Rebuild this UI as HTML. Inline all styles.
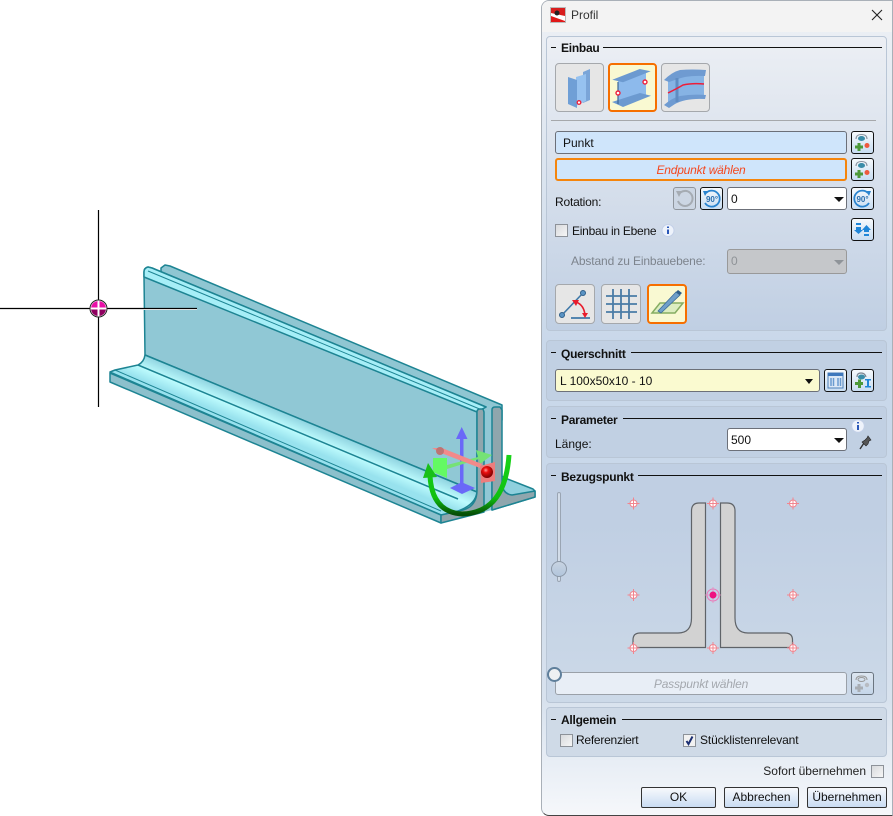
<!DOCTYPE html>
<html lang="de"><head><meta charset="utf-8"><title>Profil</title>
<style>
html,body{margin:0;padding:0;background:#fff}
body{width:893px;height:816px;position:relative;overflow:hidden;font:12px/14px "Liberation Sans",sans-serif;color:#111}
.a{position:absolute}
#dlg{left:541px;top:0;width:352px;height:816px;box-sizing:border-box;border:1px solid #a9b0b8;border-bottom:1px solid #444;border-radius:8px 0 0 8px;overflow:hidden;background:linear-gradient(#eef1f5 0,#c9d8ea 340px,#c9d8ea 460px,#d8e2ee 700px,#f6f8fb 816px)}
#tb{position:absolute;left:0;top:0;width:100%;height:31px;background:#f3f3f3}
.p{position:absolute;left:546px;width:341px;box-sizing:border-box;border:1px solid #b9c6d6;border-radius:4px;background:#c1d0e3}
.h{position:absolute;font-weight:bold;left:561px;height:14px;white-space:nowrap;letter-spacing:-.25px}
.l{position:absolute;height:1px;background:#111}
.t{position:absolute;white-space:nowrap}
.n{letter-spacing:-.2px}
.f{position:absolute;box-sizing:border-box;border:1px solid #6c7079;border-radius:3px;background:#fff;height:23px;line-height:22px;padding-left:3px}
.b{position:absolute;box-sizing:border-box;width:23px;height:23px;border:1px solid #111;border-radius:3px;background:linear-gradient(#f6f9fc,#c8ddf2)}
.b svg,.ib svg{position:absolute;left:0;top:0}
.ib{position:absolute;box-sizing:border-box;border:1px solid #a5a8ac;border-radius:4px;background:#e6e6e6}
.on{border:2px solid #f66f00;background:#f9f9d2}
.c{position:absolute;box-sizing:border-box;width:13px;height:13px;border:1px solid #8d9299;background:linear-gradient(135deg,#d8dadd,#f6f6f6)}
.ar{position:absolute;width:0;height:0;border-left:5px solid transparent;border-right:5px solid transparent;border-top:5px solid #111}
.btn{position:absolute;box-sizing:border-box;top:787px;height:21px;border:1px solid #333;border-radius:2px;text-align:center;line-height:19px;background:linear-gradient(#f7f9fc,#c9dcf3)}
</style></head><body>

<svg class="a" style="left:0;top:0" width="541" height="560" viewBox="0 0 541 560">
<defs>
<linearGradient id="fil" gradientUnits="userSpaceOnUse" x1="300" y1="419" x2="283" y2="460"><stop offset="0" stop-color="#8fd3e0"/><stop offset=".3" stop-color="#bdfbfd"/><stop offset=".55" stop-color="#98e2ee"/><stop offset="1" stop-color="#96dfed"/></linearGradient>
<linearGradient id="arc" x1="0" y1="0" x2="0" y2="1"><stop offset="0" stop-color="#19d419"/><stop offset=".72" stop-color="#10c010"/><stop offset="1" stop-color="#064f06"/></linearGradient>
<radialGradient id="ball" cx=".4" cy=".35" r=".7"><stop offset="0" stop-color="#ff9a9a"/><stop offset=".3" stop-color="#ee0f0f"/><stop offset="1" stop-color="#6d0000"/></radialGradient>
</defs>
<g stroke="#1d8493" stroke-width="1.5" stroke-linejoin="round">
<!-- back L strip + web -->
<path d="M161,272V268L165,265L170,266L502,405V420L161,275Z" fill="#8fc6d2"/>
<path d="M484,405H492V510L484,512Z" fill="#90c8d5" stroke="none"/>
<!-- back foot -->
<path d="M492,470L505,478L533,489L535,491V497L492,510Z" fill="#8fd0dd"/>
<!-- front web -->
<path d="M144,277V272Q144,268 148,267L152,268L486,407L477,412V492L145,355Z" fill="#90c8d5"/>
<path d="M144,277V272Q144,268 148,267L152,268L486,407L477,412Z" fill="#a6eef7"/>
<path d="M148,271L482,410" fill="none" stroke-width="1"/>
<!-- foot with fillet -->
<path d="M145,355L477,492Q475,510 441,515L112,373L110,372L115,370L138,365Q144,362 145,355Z" fill="url(#fil)"/>
<path d="M138,365L458,499" fill="none"/>
<path d="M115,370L441,511" fill="none" stroke-width="1"/>
<path d="M110,373V382L441,523V515Z" fill="#8cc0cc"/>
<!-- gray ends -->
<path d="M477,412Q477,409 480,409H483L484,412V512L441,523V515L463,510Q477,506 477,490Z" fill="#8fa6ad"/>
<path d="M492,410Q492,407 495,407H500L502,410V484Q503,494 512,495L535,491V497L492,510Z" fill="#8fa6ad"/>
</g>
<!-- gizmo -->
<path d="M461.700,427L467.500,439H463.500V483L475,488L462,494L450,488L460,483V439H456Z" fill="#6a68f8"/>
<path d="M433,458H447V478L433,472Z" fill="#63fa63"/>
<path d="M447,465L478,457L476,450L492,455L480,464L479,459L447,469Z" fill="#75e275"/>
<path d="M432,448L442,448L482,464L480,468L441,453Z" fill="#f28a8a"/>
<circle cx="440" cy="451" r="4" fill="#bd7474"/>
<path d="M480,466L495,462V481L481,483Z" fill="#ee7d7d"/>
<circle cx="487" cy="472" r="6" fill="url(#ball)"/>
<path d="M509,455Q505,513 462,514Q432,512 430,476" fill="none" stroke="url(#arc)" stroke-width="5"/>
<path d="M428,463L423,478L437,477Z" fill="#18c018"/>
<!-- crosshair -->
<rect x="100" y="309" width="97" height="1" fill="#fff"/>
<path d="M98.500,210V407M0,308.500H197" stroke="#000" stroke-width="1.200"/>
<circle cx="98.500" cy="308.500" r="8.500" fill="#fff" stroke="#222" stroke-width="1"/>
<path d="M91,307.500A7.500,7.500 0 0 1 97.500,301V307.500ZM99.500,301A7.500,7.500 0 0 1 106,307.500H99.500Z" fill="#ea10a8"/>
<path d="M91,309.500H97.500V316A7.500,7.500 0 0 1 91,309.500ZM99.500,309.500H106A7.500,7.500 0 0 1 99.500,316Z" fill="#900060"/>
</svg>

<div class="a" style="left:613px;top:0;width:13px;height:1px;background:#8b2a6b"></div>
<div id="dlg" class="a"><div id="tb"></div></div>

<svg class="a" style="left:550px;top:7px" width="16" height="16"><rect x=".5" y=".5" width="15" height="15" fill="#fff" stroke="#bbb"/><path d="M1,1H15V9L1,6Z" fill="#d81e1e"/><path d="M1,9L15,14V15H1Z" fill="#e01818"/><circle cx="7" cy="6" r="2.500" fill="#222"/></svg>
<div class="t" style="left:571px;top:8px;color:#333">Profil</div>
<svg class="a" style="left:871px;top:9px" width="12" height="12"><path d="M1,1L11,11M11,1L1,11" stroke="#222" stroke-width="1.100"/></svg>

<!-- panels -->
<div class="p" style="top:36px;height:295px;background:linear-gradient(#eceff4,#c0cfe3)"></div>
<div class="p" style="top:340px;height:61px"></div>
<div class="p" style="top:406px;height:52px"></div>
<div class="p" style="top:463px;height:240px;background:linear-gradient(#c0cfe3,#c0cfe3 25%,#ccd9e8)"></div>
<div class="p" style="top:707px;height:50px;background:#cfdae7"></div>

<!-- headers -->
<div class="l" style="left:551px;top:47px;width:5px"></div><div class="h" style="top:41px">Einbau</div><div class="l" style="left:603px;top:47px;width:279px"></div>
<div class="l" style="left:551px;top:352px;width:5px"></div><div class="h" style="top:347px">Querschnitt</div><div class="l" style="left:631px;top:352px;width:251px"></div>
<div class="l" style="left:551px;top:418px;width:5px"></div><div class="h" style="top:413px">Parameter</div><div class="l" style="left:623px;top:418px;width:259px"></div>
<div class="l" style="left:551px;top:475px;width:5px"></div><div class="h" style="top:470px">Bezugspunkt</div><div class="l" style="left:638px;top:475px;width:244px"></div>
<div class="l" style="left:551px;top:719px;width:5px"></div><div class="h" style="top:713px">Allgemein</div><div class="l" style="left:622px;top:719px;width:260px"></div>

<!-- Einbau type buttons -->
<div class="ib" style="left:555px;top:63px;width:49px;height:49px"><svg width="47" height="47"><path d="M27,8L34,5V36L27,39Z" fill="#7aa5d8"/><path d="M20,13L30,10V37L20,42Z" fill="#96c2f0"/><path d="M12,13L21,16V44L12,40Z" fill="#6f9fd6"/><circle cx="23" cy="38.500" r="1.800" fill="#fff" stroke="#f0203a" stroke-width="1.300"/></svg></div>
<div class="ib on" style="left:608px;top:63px;width:49px;height:49px"><svg width="45" height="45"><path d="M8,16L36,7V31L8,40Z" fill="#8dbaec"/><path d="M2.300,14.700L29.700,4L40.700,6.300L13,17.300Z" fill="#6c9ad0"/><path d="M2,37L30,28L41,30.700L13,42Z" fill="#6c9ad0"/><path d="M8,17V39" stroke="#3b6595" stroke-width="1.200"/><circle cx="35" cy="17" r="2" fill="#fff" stroke="#f0203a" stroke-width="1.400"/><circle cx="8" cy="28" r="2" fill="#fff" stroke="#f0203a" stroke-width="1.400"/></svg></div>
<div class="ib" style="left:661px;top:63px;width:49px;height:49px"><svg width="47" height="47"><path d="M6,15Q20,8 42,8V31Q22,31 6,42Z" fill="#86b3e4"/><path d="M2,16Q10,8 18,6Q30,5 44,6L43,12Q24,11 13,16L7,18Z" fill="#6f9bd1"/><path d="M2,41Q10,34 18,32Q30,30 44,31L43,35Q24,34 13,40L7,44Z" fill="#6f9bd1"/><path d="M15,14V38" stroke="#5f8cc2" stroke-width="3"/><path d="M6,29Q16,24 21,21Q30,19 42,20" fill="none" stroke="#ee1d38" stroke-width="1.500"/></svg></div>
<div class="a" style="left:551px;top:120px;width:325px;height:1px;background:#a6a8ab"></div>

<!-- Punkt -->
<div class="f" style="left:555px;top:131px;width:292px;background:#cfe5fb;padding-left:7px">Punkt</div>
<div class="f n" style="left:555px;top:158px;width:292px;background:#cfe5fb;border:2px solid #f5850c;color:#f4481f;font-style:italic;text-align:center;padding:0;line-height:21px">Endpunkt wählen</div>
<div class="b" style="left:851px;top:131px"><svg width="21" height="21"><path d="M4,7Q4,2.500 9.500,2.500T15,7" fill="none" stroke="#8b94a0" stroke-width="1.100"/><ellipse cx="9.500" cy="6.500" rx="3.500" ry="2.500" fill="#3a8ca8"/><path d="M3,13.500H5.500V11H8.500V13.500H11V16.500H8.500V19H5.500V16.500H3Z" fill="#4d9a3a"/><circle cx="15" cy="13.500" r="2.500" fill="#ee5a3e"/></svg></div>
<div class="b" style="left:851px;top:158px"><svg width="21" height="21"><path d="M4,7Q4,2.500 9.500,2.500T15,7" fill="none" stroke="#8b94a0" stroke-width="1.100"/><ellipse cx="9.500" cy="6.500" rx="3.500" ry="2.500" fill="#3a8ca8"/><path d="M3,13.500H5.500V11H8.500V13.500H11V16.500H8.500V19H5.500V16.500H3Z" fill="#4d9a3a"/><circle cx="15" cy="13.500" r="2.500" fill="#ee5a3e"/></svg></div>

<!-- Rotation -->
<div class="t n" style="left:555px;top:195px">Rotation:</div>
<div class="b" style="left:673px;top:187px;border-color:#8f959c;background:#ccd6e3"><svg width="21" height="21"><path d="M5,6A7.500,7.500 0 1 1 4,13" fill="none" stroke="#a5abb2" stroke-width="2"/><path d="M2,3L8,3L5,9Z" fill="#a5abb2"/></svg></div>
<div class="b" style="left:700px;top:187px"><svg width="21" height="21"><path d="M5,5A8,8 0 1 1 4,15" fill="none" stroke="#2a84cf" stroke-width="1.800"/><path d="M2,3H7L4,8Z" fill="#2a84cf"/><text x="11" y="14" font-size="8" font-weight="bold" text-anchor="middle" fill="#2a6fae" font-family="Liberation Sans,sans-serif">90°</text></svg></div>
<div class="f" style="left:727px;top:187px;width:120px">0</div><div class="ar" style="left:834px;top:197px"></div>
<div class="b" style="left:851px;top:187px"><svg width="21" height="21"><path d="M16,5A8,8 0 1 0 17,15" fill="none" stroke="#2a84cf" stroke-width="1.800"/><path d="M19,3H14L17,8Z" fill="#2a84cf"/><text x="10.500" y="14" font-size="8" font-weight="bold" text-anchor="middle" fill="#2a6fae" font-family="Liberation Sans,sans-serif">90°</text></svg></div>

<!-- Ebene -->
<div class="c" style="left:555px;top:224px"></div>
<div class="t n" style="left:572px;top:224px;letter-spacing:-.25px">Einbau in Ebene</div>
<svg class="a" style="left:661px;top:223px" width="14" height="15"><circle cx="7" cy="7.500" r="6" fill="#eef3fb" stroke="#c3d0e8"/><path d="M7,3.500V5M7,6.500V11" stroke="#2a57b8" stroke-width="2"/></svg>
<div class="b" style="left:851px;top:218px"><svg width="21" height="21"><path d="M4,4H9V6H4ZM12,15H17V17H12Z" fill="#1f86d8"/><path d="M4,8H9V11H11L6.500,15L2,11H4ZM12,13V11H10L14.500,6L19,11H17V13Z" fill="#1f86d8"/></svg></div>
<div class="t n" style="left:571px;top:254px;color:#7d848d;letter-spacing:-.13px">Abstand zu Einbauebene:</div>
<div class="f" style="left:727px;top:249px;width:120px;height:25px;background:#c5c7ca;border-color:#999;color:#8f9397;line-height:23px">0</div><div class="ar" style="left:834px;top:260px;border-top-color:#8f9499"></div>

<div class="ib" style="left:555px;top:284px;width:40px;height:40px"><svg width="38" height="38"><path d="M6,30L27,8" stroke="#3f78a8" stroke-width="1.600"/><circle cx="6" cy="30" r="2.500" fill="#5a93c4" stroke="#2f5f8a"/><circle cx="27" cy="8" r="2.500" fill="#5a93c4" stroke="#2f5f8a"/><path d="M15,33H34" stroke="#3f78a8" stroke-width="1.800"/><path d="M20,17Q28,20 29,30" fill="none" stroke="#e81c2c" stroke-width="1.600"/><path d="M16,15L23,15L20,21ZM26,28H32L29,33Z" fill="#e81c2c"/></svg></div>
<div class="ib" style="left:601px;top:284px;width:40px;height:40px"><svg width="38" height="38"><path d="M4,11H35M4,19H35M4,27H35M11,4V34M19,4V34M27,4V34" stroke="#4a7ca6" stroke-width="1.800"/></svg></div>
<div class="ib on" style="left:647px;top:284px;width:40px;height:40px"><svg width="36" height="36"><path d="M3,27L11,17H34L26,27Z" fill="#dcedc0" stroke="#86ad62" stroke-width="1.500"/><path d="M9,25L27,6L31,9L12,27Z" fill="#6f9fc9" stroke="#3a6c99" stroke-width=".8"/><path d="M27,6L29,4L33,7L31,9Z" fill="#2f5e89"/></svg></div>

<!-- Querschnitt -->
<div class="f" style="left:555px;top:369px;width:265px;background:#fafad0;padding-left:4px">L 100x50x10 - 10</div><div class="ar" style="left:805px;top:379px;border-left-width:4px;border-right-width:4px"></div>
<div class="b" style="left:824px;top:369px"><svg width="21" height="21"><rect x="3" y="3" width="15" height="15" fill="#dce8f6" stroke="#4d7fb8"/><rect x="3" y="3" width="15" height="3" fill="#3f78bc"/><path d="M6,8V16M8.500,8V16M13,8V16M15.500,8V16" stroke="#6a9bd0" stroke-width="1.500"/></svg></div>
<div class="b" style="left:851px;top:369px"><svg width="21" height="21"><path d="M5,7Q5,3 9,3T14,7" fill="none" stroke="#7b8490" stroke-width="1.200"/><ellipse cx="9.500" cy="7" rx="3.500" ry="2.500" fill="#3a8ca8"/><path d="M3,12H6V9.500H9V12H11V15H9V18H6V15H3Z" fill="#4d9a3a"/><path d="M13,9H19V10.500H17V16H19V17.500H13V16H15V10.500H13Z" fill="#1f86d8"/></svg></div>

<!-- Parameter -->
<div class="t" style="left:555px;top:437px">Länge:</div>
<div class="f" style="left:727px;top:428px;width:120px">500</div><div class="ar" style="left:834px;top:438px"></div>
<svg class="a" style="left:851px;top:419px" width="14" height="14"><circle cx="7" cy="7" r="6.300" fill="#eef3fb" stroke="#c3d0e8"/><path d="M7,3V4.500M7,6V11" stroke="#2a57b8" stroke-width="2"/></svg>
<svg class="a" style="left:858px;top:434px" width="16" height="16"><path d="M2,15L6,9" stroke="#333" stroke-width="1.400"/><path d="M4,8L8,12L10,10L11,7L13,6L10,2L9,4L7,6Z" fill="#555" stroke="#222" stroke-width=".6"/></svg>

<!-- Bezugspunkt -->
<div class="a" style="left:557px;top:492px;width:4px;height:90px;box-sizing:border-box;border:1px solid #9aa5b3;border-radius:2px;background:#d3dde9"></div>
<div class="a" style="left:551px;top:561px;width:16px;height:16px;box-sizing:border-box;border:1px solid #8b97a6;border-radius:50%;background:linear-gradient(#c8d4e2,#b2c6dc)"></div>
<svg class="a" style="left:620px;top:490px" width="190" height="170" viewBox="620 490 190 170">
<path d="M705.500,503V647.500H633V640Q633,633 640,633H678Q691.500,633 691.500,618V511Q691.500,503 699,503Z" fill="#d2d2d2" stroke="#5f6368" stroke-width="1.200"/>
<path d="M720.500,503V647.500H792.500V640Q792.500,633 785,633H748Q735,633 735,618V511Q735,503 727,503Z" fill="#d2d2d2" stroke="#5f6368" stroke-width="1.200"/>
<g fill="#fff" stroke="#f2858f">
<circle cx="633.500" cy="503.500" r="3.500"/><circle cx="713" cy="503.500" r="3.500"/><circle cx="793" cy="503.500" r="3.500"/>
<circle cx="633.500" cy="595" r="3.500"/><circle cx="793" cy="595" r="3.500"/>
<circle cx="633.500" cy="648" r="3.500"/><circle cx="713" cy="648" r="3.500"/><circle cx="793" cy="648" r="3.500"/>
<path fill="none" d="M627.500,503.500H639.500M633.500,497.500V509.500M707,503.500H719M713,497.500V509.500M787,503.500H799M793,497.500V509.500M627.500,595H639.500M633.500,589V601M787,595H799M793,589V601M627.500,648H639.500M633.500,642V654M707,648H719M713,642V654M787,648H799M793,642V654"/>
</g>
<circle cx="713" cy="595" r="6" fill="none" stroke="#e878b8"/><path d="M705,595H721M713,587V603" stroke="#ea8cc0" stroke-width=".8"/><circle cx="713" cy="595" r="3.500" fill="#ee1280"/>
</svg>
<div class="f n" style="left:555px;top:672px;width:292px;background:#e8eef6;border-color:#9aa0a8;color:#a4a8ae;font-style:italic;text-align:center;padding:0">Passpunkt wählen</div>
<div class="a" style="left:547px;top:667px;width:15px;height:15px;box-sizing:border-box;border:2px solid #5f7f9b;border-radius:50%;background:#eef0f2"></div>
<div class="b" style="left:851px;top:672px;border-color:#6b7580;background:linear-gradient(#dde6f0,#c5d6e9)"><svg width="21" height="21"><path d="M4,7Q4,3 9.500,3T15,7" fill="none" stroke="#999" stroke-width="1"/><ellipse cx="9.500" cy="6.500" rx="3.500" ry="2" fill="none" stroke="#999"/><path d="M3,13.500H5.500V11H8.500V13.500H11V16.500H8.500V19H5.500V16.500H3Z" fill="#a8adb3"/><circle cx="15" cy="12" r="2.200" fill="#b8bcc2"/></svg></div>

<!-- Allgemein -->
<div class="c" style="left:560px;top:734px"></div><div class="t n" style="left:576px;top:733px;letter-spacing:-.25px">Referenziert</div>
<div class="c" style="left:683px;top:734px;background:#f2f2f2"><svg width="11" height="11" style="position:absolute;left:0;top:0"><path d="M2.500,6L4.500,9L8.500,1.500" fill="none" stroke="#1c2f72" stroke-width="2"/></svg></div><div class="t n" style="left:700px;top:733px;letter-spacing:-.12px">Stücklistenrelevant</div>

<div class="t" style="right:27px;top:764px;color:#222">Sofort übernehmen</div>
<div class="c" style="left:871px;top:765px"></div>
<div class="btn" style="left:641px;width:75px">OK</div>
<div class="btn" style="left:724px;width:75px">Abbrechen</div>
<div class="btn" style="left:807px;width:80px">Übernehmen</div>
</body></html>
